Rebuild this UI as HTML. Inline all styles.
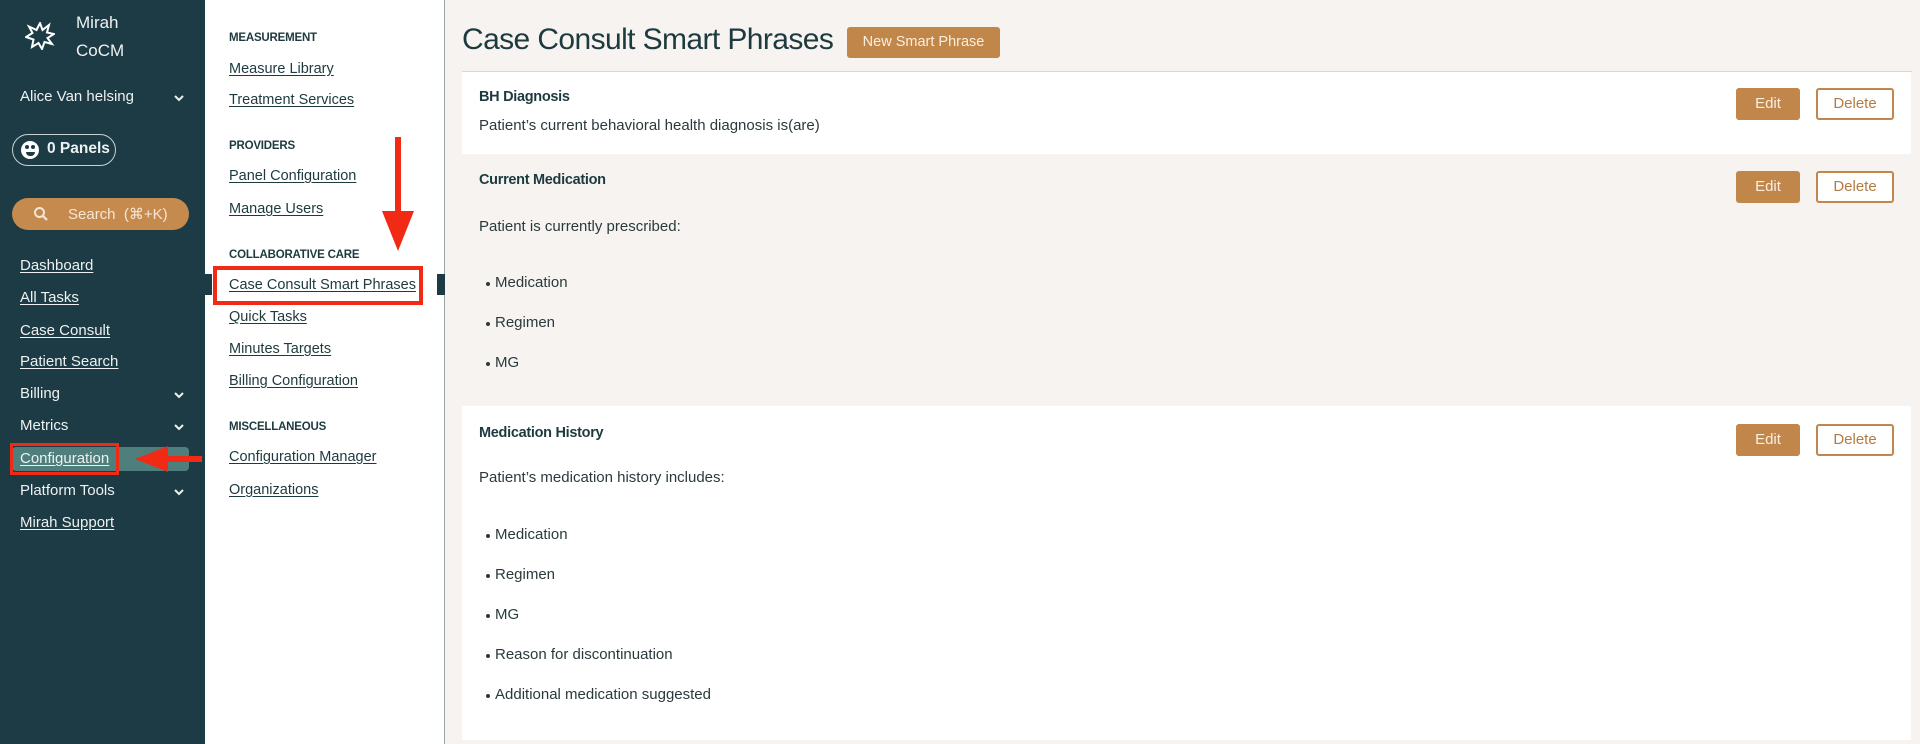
<!DOCTYPE html>
<html><head><meta charset="utf-8"><style>
*{margin:0;padding:0;box-sizing:border-box}
body{width:1920px;height:744px;overflow:hidden;font-family:"Liberation Sans",sans-serif;background:#f6f3f0;position:relative;color:#1d3a3f}
.a{position:absolute;white-space:nowrap}
.sb{left:0;top:0;width:205px;height:744px;background:#1c3b45}
.sn{left:205px;top:0;width:240px;height:744px;background:#fff;border-right:1px solid #9aa5a8}
.w{color:#eef1f1}
.nav{font-size:15px;color:#eef1f1;text-decoration:underline;text-underline-offset:2px;line-height:18px}
.nv{font-size:15px;color:#eef1f1;line-height:18px}
.chev{left:172px;width:14px;height:10px}
.h{font-size:11.5px;font-weight:bold;color:#1d3a3f;left:229px;line-height:14px;letter-spacing:-.2px}
.l{font-size:14.5px;color:#1d3a3f;left:229px;text-decoration:underline;text-underline-offset:2px;line-height:18px}
.ct{font-size:14.5px;font-weight:bold;color:#1d3a3f;left:479px;line-height:18px;letter-spacing:-.3px}
.cx{font-size:15px;color:#2a3a3c;left:479px;line-height:18px}
.li{font-size:15px;color:#2a3a3c;left:495px;line-height:18px}
.li:before{content:"";position:absolute;left:-9px;top:8px;width:4px;height:4px;border-radius:50%;background:#2a3a3c}
.ed{left:1736px;width:64px;height:32px;background:#c1864a;border-radius:3px;color:#fbeede;font-size:15px;text-align:center;line-height:32px}
.de{left:1816px;width:78px;height:32px;border:2px solid #c1864a;border-radius:3px;background:#fff;color:#b57a40;font-size:15px;text-align:center;line-height:28px}
</style></head><body>
<div class="a sb"></div>
<div class="a sn"></div>
<!-- logo -->
<svg class="a" style="left:25px;top:22px" width="30" height="28" viewBox="0 0 30 28"><path d="M15 1 L17.5 8 L24 3 L22 10.5 L29 12 L22.5 16 L27 22 L19.5 20 L17 27 L13.5 21 L7 25 L8.5 17.5 L1 15 L7.5 11 L4 4.5 L11.5 8 Z" fill="none" stroke="#fff" stroke-width="2" stroke-linejoin="miter"/></svg>
<div class="a w" style="left:76px;top:13px;font-size:17px">Mirah</div>
<div class="a w" style="left:76px;top:41px;font-size:17px">CoCM</div>
<div class="a nv" style="left:20px;top:88px">Alice Van helsing</div>
<svg class="a chev" style="top:93px" viewBox="0 0 14 10"><path d="M3 3 L7 7 L11 3" stroke="#eef1f1" stroke-width="2" fill="none"/></svg>
<div class="a" style="left:12px;top:134px;width:104px;height:32px;border:1px solid #c9d2d3;border-radius:16px"></div>
<div class="a" style="left:21px;top:141px;width:18px;height:18px;border-radius:50%;background:#fff"></div>
<div class="a" style="left:25px;top:145px;width:4px;height:4px;border-radius:50%;background:#1c3b45"></div>
<div class="a" style="left:31px;top:145px;width:4px;height:4px;border-radius:50%;background:#1c3b45"></div>
<div class="a" style="left:26px;top:152px;width:9px;height:4px;border-radius:0 0 4px 4px;background:#1c3b45"></div>
<div class="a w" style="left:47px;top:140px;font-size:15.5px;font-weight:bold">0 Panels</div>
<div class="a" style="left:12px;top:198px;width:177px;height:32px;background:#c58a4e;border-radius:16px"></div>
<svg class="a" style="left:33px;top:206px" width="16" height="16" viewBox="0 0 16 16"><circle cx="6.5" cy="6.5" r="4.5" stroke="#f6e6d4" stroke-width="2" fill="none"/><path d="M10 10 L14 14" stroke="#f6e6d4" stroke-width="2.2"/></svg>
<div class="a" style="left:68px;top:205px;font-size:15px;color:#f6e6d4">Search&nbsp;&nbsp;(⌘+K)</div>
<div class="a nav" style="left:20px;top:257px">Dashboard</div>
<div class="a nav" style="left:20px;top:289px">All Tasks</div>
<div class="a nav" style="left:20px;top:322px">Case Consult</div>
<div class="a nav" style="left:20px;top:353px">Patient Search</div>
<div class="a nv" style="left:20px;top:385px">Billing</div>
<svg class="a chev" style="top:390px" viewBox="0 0 14 10"><path d="M3 3 L7 7 L11 3" stroke="#eef1f1" stroke-width="2" fill="none"/></svg>
<div class="a nv" style="left:20px;top:417px">Metrics</div>
<svg class="a chev" style="top:422px" viewBox="0 0 14 10"><path d="M3 3 L7 7 L11 3" stroke="#eef1f1" stroke-width="2" fill="none"/></svg>
<div class="a" style="left:12px;top:447px;width:177px;height:24px;background:#4e7f7d;border-radius:4px"></div>
<div class="a nav" style="left:20px;top:450px">Configuration</div>
<div class="a" style="left:10px;top:443px;width:109px;height:32px;border:3px solid #f02a14"></div>
<svg class="a" style="left:132px;top:443px" width="70" height="32" viewBox="0 0 70 32"><rect x="30" y="13" width="40" height="6" fill="#f02a14"/><path d="M3 16 L36 3 L36 29 Z" fill="#f02a14"/></svg>
<div class="a nv" style="left:20px;top:482px">Platform Tools</div>
<svg class="a chev" style="top:487px" viewBox="0 0 14 10"><path d="M3 3 L7 7 L11 3" stroke="#eef1f1" stroke-width="2" fill="none"/></svg>
<div class="a nav" style="left:20px;top:514px">Mirah Support</div>

<!-- subnav -->
<div class="a h" style="top:31px">MEASUREMENT</div>
<div class="a l" style="top:60px">Measure Library</div>
<div class="a l" style="top:91px">Treatment Services</div>
<div class="a h" style="top:139px">PROVIDERS</div>
<div class="a l" style="top:167px">Panel Configuration</div>
<div class="a l" style="top:200px">Manage Users</div>
<div class="a h" style="top:248px">COLLABORATIVE CARE</div>
<div class="a" style="left:205px;top:274px;width:7px;height:21px;background:#1c3b45"></div>
<div class="a" style="left:437px;top:274px;width:8px;height:21px;background:#1c3b45"></div>
<div class="a l" style="top:276px">Case Consult Smart Phrases</div>
<div class="a" style="left:213px;top:266px;width:210px;height:39px;border:4px solid #f02a14"></div>
<svg class="a" style="left:380px;top:137px" width="36" height="116" viewBox="0 0 36 116"><rect x="15" y="0" width="6" height="84" fill="#f02a14"/><path d="M2 74 L34 74 L18 114 Z" fill="#f02a14"/></svg>
<div class="a l" style="top:308px">Quick Tasks</div>
<div class="a l" style="top:340px">Minutes Targets</div>
<div class="a l" style="top:372px">Billing Configuration</div>
<div class="a h" style="top:420px">MISCELLANEOUS</div>
<div class="a l" style="top:448px">Configuration Manager</div>
<div class="a l" style="top:481px">Organizations</div>

<!-- main -->
<div class="a" style="left:462px;top:23px;font-size:30px;color:#1d3a3f;letter-spacing:-.6px">Case Consult Smart Phrases</div>
<div class="a" style="left:847px;top:27px;width:153px;height:31px;background:#c1864a;border-radius:3px;color:#fbeede;font-size:14.5px;text-align:center;line-height:31px">New Smart Phrase</div>
<div class="a" style="left:462px;top:71px;width:1450px;height:1px;background:#ddd6cf"></div>
<div class="a" style="left:462px;top:72px;width:1449px;height:82px;background:#fff"></div>
<div class="a" style="left:462px;top:406px;width:1449px;height:334px;background:#fff"></div>

<div class="a ct" style="top:88px">BH Diagnosis</div>
<div class="a cx" style="top:117px">Patient’s current behavioral health diagnosis is(are)</div>
<div class="a ed" style="top:88px">Edit</div><div class="a de" style="top:88px">Delete</div>

<div class="a ct" style="top:171px">Current Medication</div>
<div class="a cx" style="top:218px">Patient is currently prescribed:</div>
<div class="a li" style="top:274px">Medication</div>
<div class="a li" style="top:314px">Regimen</div>
<div class="a li" style="top:354px">MG</div>
<div class="a ed" style="top:171px">Edit</div><div class="a de" style="top:171px">Delete</div>

<div class="a ct" style="top:424px">Medication History</div>
<div class="a cx" style="top:469px">Patient’s medication history includes:</div>
<div class="a li" style="top:526px">Medication</div>
<div class="a li" style="top:566px">Regimen</div>
<div class="a li" style="top:606px">MG</div>
<div class="a li" style="top:646px">Reason for discontinuation</div>
<div class="a li" style="top:686px">Additional medication suggested</div>
<div class="a ed" style="top:424px">Edit</div><div class="a de" style="top:424px">Delete</div>
</body></html>
